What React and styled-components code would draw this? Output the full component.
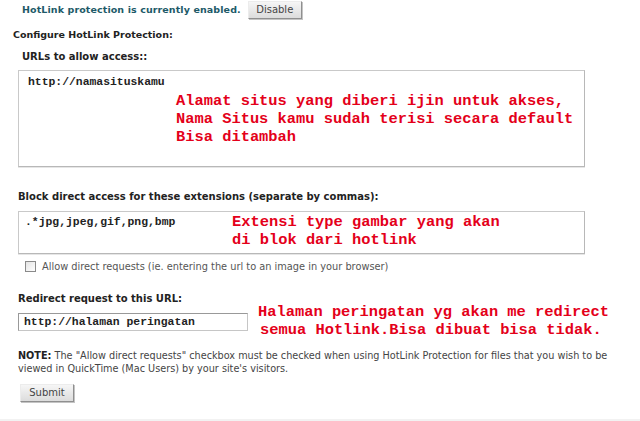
import React from "react";
import styled, { createGlobalStyle } from "styled-components";

const GlobalStyle = createGlobalStyle`
  html, body {
    margin: 0;
    padding: 0;
    background: #fff;
  }
  body {
    font-family: "DejaVu Sans", Verdana, sans-serif;
    color: #222;
  }
`

const Page = styled.div`
  width: 640px;
  height: 421px;
  overflow: hidden;
  box-sizing: border-box;
  padding-top: 1px;
  border-bottom: 2px solid #f2f2f2;
`

const StatusRow = styled.div`
  display: flex;
  align-items: center;
  height: 17px;
  padding-left: 22px;
  gap: 7px;
`

const StatusText = styled.span`
  font-size: 9.5px;
  font-weight: bold;
  color: #1d5a68;
  letter-spacing: 0.1px;
`

const OldButton = styled.button`
  font-family: "DejaVu Sans", Verdana, sans-serif;
  font-size: 10px;
  color: #444;
  width: ${(p) => p.$w}px;
  height: 18px;
  padding: 0;
  background: linear-gradient(#f6f6f6, #dcdcdc);
  border: 1px solid;
  border-color: #ececec #8f8f8f #8f8f8f #ececec;
  box-shadow: 1px 1px 0 #c4c4c4;
`

const SectionTitle = styled.div`
  font-size: 9.5px;
  font-weight: bold;
  color: #222;
  margin: 10px 0 0 13px;
  line-height: 14px;
`

const Label = styled.div`
  font-size: 10px;
  font-weight: bold;
  color: #222;
  line-height: 14px;
  white-space: nowrap;
  margin: ${(p) => p.$mt}px 0 0 ${(p) => p.$ml}px;
`

const FieldBox = styled.div`
  box-sizing: border-box;
  width: 567px;
  height: ${(p) => p.$h}px;
  margin: ${(p) => p.$mt}px 0 0 18px;
  border: 1px solid #c9c9c9;
  border-right-color: #b8b8b8;
  border-bottom-color: #b8b8b8;
  box-shadow: 0 1px 0 #e6e6e6;
  padding: ${(p) => p.$pad};
  display: flex;
  flex-direction: ${(p) => (p.$stack ? "column" : "row")};
  background: #fff;
`

const Value = styled.div`
  font-family: "Liberation Mono", "Courier New", monospace;
  font-weight: bold;
  font-size: 11.4px;
  line-height: 14px;
  color: #222;
  white-space: nowrap;
  flex-shrink: 0;
  width: ${(p) => (p.$w ? `${p.$w}px` : "auto")};
`

const Note = styled.div`
  font-family: "Liberation Mono", "Courier New", monospace;
  font-weight: bold;
  font-size: 15.4px;
  line-height: 18px;
  color: #e4001a;
  white-space: nowrap;
  margin: ${(p) => p.$m || 0};
`

const Indent = styled.span`
  padding-left: 2px;
`

const CheckRow = styled.label`
  display: flex;
  align-items: center;
  gap: 6px;
  margin: 6px 0 0 25px;
  height: 12px;
`

const Box = styled.span`
  box-sizing: border-box;
  width: 11px;
  height: 11px;
  border: 1px solid #8a8a8a;
  background: linear-gradient(135deg, #e4e4e4, #fff);
`

const SmallText = styled.span`
  font-size: 9.8px;
  color: #555;
  white-space: nowrap;
`

const RedirectRow = styled.div`
  display: flex;
  align-items: flex-start;
  height: 32px;
  margin-left: 18px;
`

const UrlInput = styled.div`
  box-sizing: border-box;
  width: 230px;
  height: 18px;
  margin-top: 7px;
  border: 1px solid #999;
  border-right-color: #c6c6c6;
  border-bottom-color: #c6c6c6;
  padding: 1px 0 0 5px;
`

const Paragraph = styled.p`
  font-size: 9.7px;
  line-height: 13px;
  color: #444;
  margin: 11px 0 0 18px;
  width: 615px;

  b {
    color: #222;
  }
`

const SubmitWrap = styled.div`
  margin: 6px 0 0 20px;
`

const App = () => {
  return (
    <>
      <GlobalStyle />
      <Page>
        <StatusRow>
          <StatusText>HotLink protection is currently enabled.</StatusText>
          <OldButton $w={54}>Disable</OldButton>
        </StatusRow>

        <SectionTitle>Configure HotLink Protection:</SectionTitle>

        <Label $mt={8} $ml={22}>URLs to allow access::</Label>
        <FieldBox $h={97} $mt={6} $pad="4px 0 0 9px" $stack>
          <Value>http://namasituskamu</Value>
          <Note $m="3px 0 0 148px">
            Alamat situs yang diberi ijin untuk akses,
            <br />
            Nama Situs kamu sudah terisi secara default
            <br />
            Bisa ditambah
          </Note>
        </FieldBox>

        <Label $mt={23} $ml={18}>Block direct access for these extensions (separate by commas):</Label>
        <FieldBox $h={43} $mt={7} $pad="3px 0 0 6px">
          <Value $w={207}>.*jpg,jpeg,gif,png,bmp</Value>
          <Note $m="-2px 0 0 0">
            Extensi type gambar yang akan
            <br />
            di blok dari hotlink
          </Note>
        </FieldBox>

        <CheckRow>
          <Box />
          <SmallText>Allow direct requests (ie. entering the url to an image in your browser)</SmallText>
        </CheckRow>

        <Label $mt={20} $ml={18}>Redirect request to this URL:</Label>
        <RedirectRow>
          <UrlInput>
            <Value>http://halaman peringatan</Value>
          </UrlInput>
          <Note $m="-3px 0 0 10px">
            Halaman peringatan yg akan me redirect
            <br />
            <Indent>semua Hotlink.Bisa dibuat bisa tidak.</Indent>
          </Note>
        </RedirectRow>

        <Paragraph>
          <b>NOTE:</b> The "Allow direct requests" checkbox must be checked when using HotLink Protection for files that you wish to be viewed in QuickTime (Mac Users) by your site's visitors.
        </Paragraph>

        <SubmitWrap>
          <OldButton $w={54}>Submit</OldButton>
        </SubmitWrap>
      </Page>
    </>
  );
};

export default App;
